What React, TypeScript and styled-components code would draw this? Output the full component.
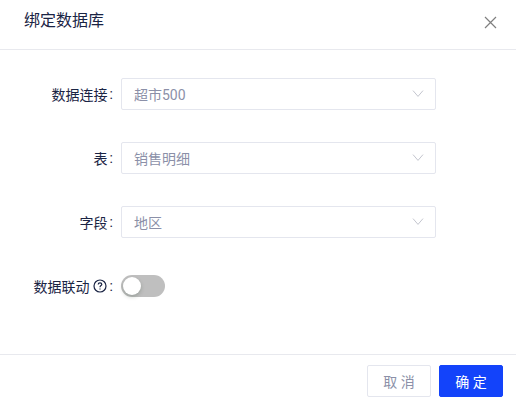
import React from "react";
import styled, { createGlobalStyle } from "styled-components";

const Global = createGlobalStyle`
  html, body { margin: 0; padding: 0; background: #fff; }
  body { font-family: Roboto, "Noto Sans CJK SC", sans-serif; }
`;

const Dialog = styled.div`
  width: 516px;
  height: 404px;
  display: flex;
  flex-direction: column;
  background: #fff;
  box-sizing: border-box;
`;

const Header = styled.header`
  height: 50px;
  box-sizing: border-box;
  flex: none;
  display: flex;
  align-items: center;
  justify-content: space-between;
  padding: 0 19px 8px 24px;
  border-bottom: 1px solid #e8e9ee;
`;

const Title = styled.h1`
  margin: 0;
  font-size: 16px;
  font-weight: 400;
  line-height: 24px;
  color: #1a2444;
`;

const CloseButton = styled.button`
  width: 13px;
  height: 13px;
  padding: 0;
  margin-top: 4px;
  border: 0;
  background: none;
  display: block;
  color: #7f7f7f;
`;

const Body = styled.main`
  flex: 1;
  padding-top: 28px;
  display: flex;
  flex-direction: column;
  gap: 32px;
`;

const Row = styled.div`
  display: flex;
  align-items: center;
  height: 32px;
`;

const Label = styled.label`
  width: 121px;
  box-sizing: border-box;
  padding-right: 8px;
  display: flex;
  justify-content: flex-end;
  align-items: center;
  font-size: 14px;
  color: #1a2444;
`;

const Colon = styled.span`
  margin-left: 2px;
`;

const HelpIcon = styled.svg`
  width: 14px;
  height: 14px;
  margin-left: 3px;
  margin-right: 1px;
  color: #1a2444;
`;

const Select = styled.div`
  width: 315px;
  height: 32px;
  box-sizing: border-box;
  display: flex;
  align-items: center;
  justify-content: space-between;
  padding: 0 11px 0 12px;
  border: 1px solid #e4e6ee;
  border-radius: 2px;
  background: #fff;
  font-size: 14px;
  color: #8b90a8;
`;

const Chevron = styled.svg`
  width: 12px;
  height: 12px;
  color: #c4c6cf;
`;

const SwitchTrack = styled.div`
  width: 44px;
  height: 22px;
  border-radius: 11px;
  background: #bfbfbf;
  display: flex;
  align-items: center;
  padding-left: 2px;
  box-sizing: border-box;
`;

const SwitchKnob = styled.span`
  width: 18px;
  height: 18px;
  border-radius: 50%;
  background: #fff;
  box-shadow: 0 2px 4px rgba(0, 35, 11, 0.2);
`;

const Footer = styled.footer`
  height: 50px;
  box-sizing: border-box;
  flex: none;
  display: flex;
  justify-content: flex-end;
  gap: 8px;
  padding: 10px 13px 0 0;
  border-top: 1px solid #e8e9ee;
`;

const Button = styled.button<{ $primary?: boolean }>`
  width: 64px;
  height: 32px;
  box-sizing: border-box;
  padding: 0;
  border: 1px solid ${(p) => (p.$primary ? "#1343fa" : "#e4e6ee")};
  border-radius: 2px;
  background: ${(p) => (p.$primary ? "#1343fa" : "#fff")};
  color: ${(p) => (p.$primary ? "#fff" : "#8b90a8")};
  font-family: inherit;
  font-size: 14px;
`;

const Field = ({ label, value }: { label: string; value: string }) => (
  <Row>
    <Label>
      {label}
      <Colon>:</Colon>
    </Label>
    <Select>
      <span>{value}</span>
      <Chevron viewBox="0 0 12 12" fill="none" stroke="currentColor" strokeWidth="1">
        <path d="M1 2.6 L6 8.4 L11 2.6" />
      </Chevron>
    </Select>
  </Row>
);

export default function App() {
  return (
    <Dialog>
      <Global />
      <Header>
        <Title>绑定数据库</Title>
        <CloseButton aria-label="关闭">
          <svg viewBox="0 0 13 13" width="13" height="13" fill="none" stroke="currentColor" strokeWidth="1.2">
            <path d="M1 1 L12 12 M12 1 L1 12" />
          </svg>
        </CloseButton>
      </Header>
      <Body>
        <Field label="数据连接" value="超市500" />
        <Field label="表" value="销售明细" />
        <Field label="字段" value="地区" />
        <Row>
          <Label>
            数据联动
            <HelpIcon viewBox="0 0 14 14" fill="none" stroke="currentColor" strokeWidth="1.2">
              <circle cx="7" cy="7" r="6" />
              <path d="M5.2 5.6 C5.2 4.4 6 3.9 7 3.9 C8 3.9 8.8 4.5 8.8 5.4 C8.8 6.6 7 6.6 7 8.2" />
              <path d="M7 9.4 V10.4" />
            </HelpIcon>
            <Colon>:</Colon>
          </Label>
          <SwitchTrack>
            <SwitchKnob />
          </SwitchTrack>
        </Row>
      </Body>
      <Footer>
        <Button>取 消</Button>
        <Button $primary>确 定</Button>
      </Footer>
    </Dialog>
  );
}
